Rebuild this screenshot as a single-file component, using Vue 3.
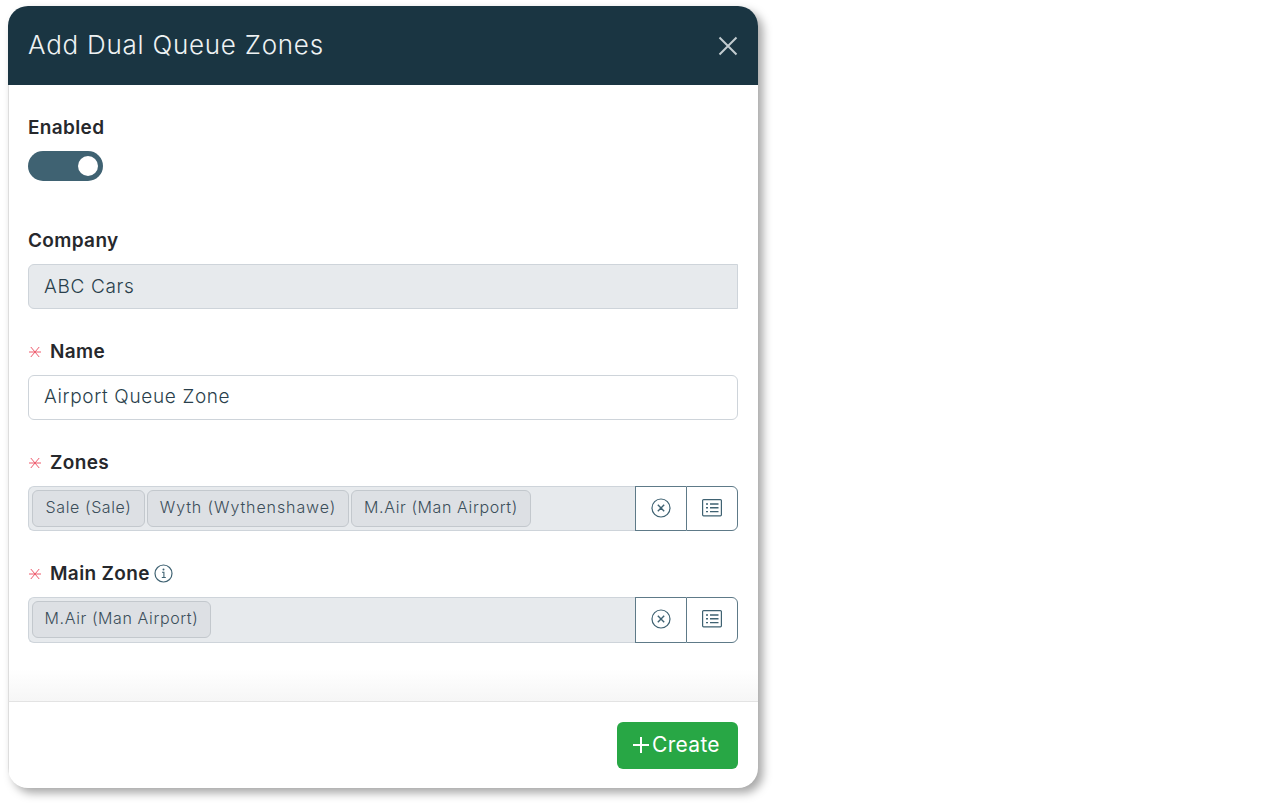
<script setup>
const sale = { text: 'Sale (Sale)', width: 113, spacing: 0.6 }
const wyth = { text: 'Wyth (Wythenshawe)', width: 202, spacing: 0.9 }
const air = { text: 'M.Air (Man Airport)', width: 180, spacing: 0.6 }
const airMain = { text: 'M.Air (Man Airport)', width: 179, spacing: 0.6 }
const fields = [
  { label: 'Zones', chips: [sale, wyth, air], info: false },
  { label: 'Main Zone', chips: [airMain], info: true },
]
</script>

<template>
  <div class="panel">
    <header class="head">
      <h1 class="title">Add Dual Queue Zones</h1>
      <svg class="close" width="20" height="20" viewBox="0 0 20 20"><path d="M1.5 1.5 18.5 18.5M18.5 1.5 1.5 18.5" stroke="#c3ccd0" stroke-width="2" fill="none"/></svg>
    </header>
    <main class="body">
      <div class="enabled">
        <div class="label">Enabled</div>
        <div class="switch"><span class="knob"></span></div>
      </div>
      <div class="field">
        <div class="label">Company</div>
        <div class="input disabled">ABC Cars</div>
      </div>
      <div class="field">
        <div class="label"><svg class="req" width="12" height="12" viewBox="0 0 12 12"><path d="M0 6H12M1.8 1 10.2 11M10.2 1 1.8 11" stroke="#ee5a6c" stroke-width="1" fill="none"/></svg>Name</div>
        <div class="input">Airport Queue Zone</div>
      </div>
      <div v-for="f in fields" :key="f.label" class="field">
        <div class="label">
          <svg class="req" width="12" height="12" viewBox="0 0 12 12"><path d="M0 6H12M1.8 1 10.2 11M10.2 1 1.8 11" stroke="#ee5a6c" stroke-width="1" fill="none"/></svg>{{ f.label }}
          <svg v-if="f.info" class="info" width="19" height="19" viewBox="0 0 19 19"><circle cx="9.5" cy="9.5" r="8.5" fill="none" stroke="#3f6272" stroke-width="1.2"/><path d="M8 8.3h1.9v5M7.8 13.5h4" fill="none" stroke="#3f6272" stroke-width="1.1"/><circle cx="9.5" cy="5.6" r="1" fill="#3f6272"/></svg>
        </div>
        <div class="picker">
          <div class="chips">
            <span v-for="c in f.chips" :key="c.text" class="chip" :style="{ width: c.width + 'px', letterSpacing: c.spacing + 'px' }">{{ c.text }}</span>
          </div>
          <button class="pbtn">
            <svg width="20" height="20" viewBox="0 0 20 20"><circle cx="10" cy="10" r="9" fill="none" stroke="#3f6272" stroke-width="1.2"/><path d="M6.8 6.8 13.2 13.2M13.2 6.8 6.8 13.2" stroke="#3f6272" stroke-width="1.4" fill="none"/></svg>
          </button>
          <button class="pbtn last">
            <svg width="20" height="18" viewBox="0 0 20 18"><rect x=".6" y=".6" width="18.8" height="16.2" rx="1" fill="none" stroke="#3f6272" stroke-width="1.2"/><path d="M4 5h2M8 5h8.5M4 8.8h2M8 8.8h8.5M4 12.6h2M8 12.6h8.5" stroke="#3f6272" stroke-width="1.4" fill="none"/></svg>
          </button>
        </div>
      </div>
    </main>
    <footer class="foot">
      <button class="create">
        <svg width="16" height="16" viewBox="0 0 16 16"><path d="M8 0V16M0 8H16" stroke="#fff" stroke-width="2" fill="none"/></svg>
        Create
      </button>
    </footer>
  </div>
</template>

<style>
html, body { min-height: 812px; background: #fff; }
</style>

<style scoped>
.panel {
  box-sizing: border-box;
  width: 750px;
  height: 782px;
  margin: 6px 0 0 8px;
  display: flex;
  flex-direction: column;
  background: #fff;
  border-radius: 20px;
  box-shadow: 5px 5px 10px rgba(0, 0, 0, 0.35);
  font-family: "Inter", "Noto Sans", sans-serif;
  color: #3f5360;
  overflow: hidden;
}
.head {
  height: 79px;
  flex: none;
  background: #1a3542;
  display: flex;
  align-items: center;
  justify-content: space-between;
  padding: 0 20px;
}
.title {
  margin: 0 0 2px;
  font-size: 26px;
  font-weight: 300;
  letter-spacing: 0.75px;
  color: #eef2f3;
}
.body {
  flex: 1;
  padding: 30px 20px 0 19px;
  border-left: 1px solid #ddd;
  background: linear-gradient(to bottom, #fff calc(100% - 32px), #f6f6f6 100%);
}
.enabled { height: 113px; }
.field { height: 111px; }
.label {
  display: flex;
  align-items: center;
  height: 24px;
  margin-bottom: 12px;
  font-size: 19px;
  font-weight: 600;
  letter-spacing: 0.35px;
  color: #26282c;
}
.switch {
  position: relative;
  width: 75px;
  height: 30px;
  border-radius: 15px;
  background: #3f6272;
}
.knob {
  position: absolute;
  top: 5px;
  right: 5px;
  width: 20px;
  height: 20px;
  border-radius: 50%;
  background: #fff;
}
.input {
  box-sizing: border-box;
  height: 45px;
  display: flex;
  align-items: center;
  padding: 0 15px 2px;
  border: 1px solid #ced4da;
  border-radius: 6px;
  font-size: 19px;
  font-weight: 300;
  letter-spacing: 0.65px;
  color: #2a3f4c;
}
.disabled {
  padding-bottom: 0;
  background: #e7eaed;
  border-radius: 6px 0 0 6px;
}
.req {
  margin: 2px 9px 0 1px;
  flex: none;
}
.info { margin-left: 4px; }
.picker {
  display: flex;
  height: 45px;
  box-sizing: border-box;
}
.field:last-child .picker { height: 46px; }
.chips {
  flex: 1;
  display: flex;
  align-items: flex-start;
  gap: 2px;
  padding: 3px 0 0 3px;
  background: #e7eaed;
  border: 1px solid #ced4da;
  border-right: 0;
  border-radius: 6px 0 0 6px;
}
.chip {
  box-sizing: border-box;
  height: 37px;
  display: flex;
  align-items: center;
  justify-content: center;
  padding: 0 0 4px;
  background: #dde0e4;
  border: 1px solid #c3c8cd;
  border-radius: 6px;
  font-size: 16px;
  font-weight: 300;
  color: #3b4e5a;
}
.pbtn {
  box-sizing: border-box;
  width: 51px;
  height: 100%;
  display: flex;
  align-items: center;
  justify-content: center;
  padding: 0 0 2px;
  background: #fff;
  border: 1px solid #5e7a88;
  border-right: 0;
}
.pbtn.last {
  width: 52px;
  border-right: 1px solid #5e7a88;
  border-radius: 0 6px 6px 0;
}
.foot {
  height: 87px;
  flex: none;
  box-sizing: border-box;
  border-top: 1px solid #e3e3e3;
  border-left: 1px solid #ddd;
  display: flex;
  justify-content: flex-end;
  padding: 20px 20px 0;
}
.create {
  width: 121px;
  height: 47px;
  display: flex;
  align-items: center;
  justify-content: center;
  gap: 3px;
  background: #28a745;
  border: 0;
  border-radius: 6px;
  color: #fff;
  font-family: inherit;
  font-size: 21px;
  font-weight: 400;
  letter-spacing: 0.3px;
  padding: 0 2px 2px 0;
}
</style>
